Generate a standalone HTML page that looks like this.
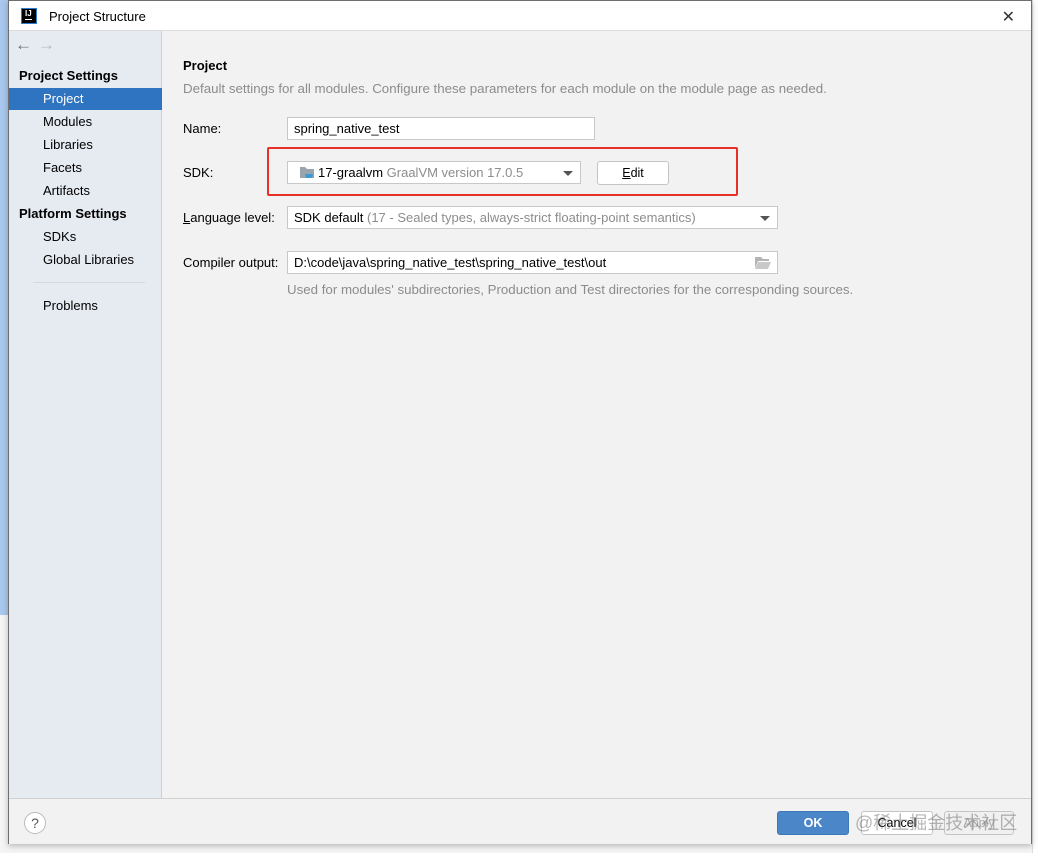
<!DOCTYPE html>
<html><head><meta charset="utf-8"><style>
*{box-sizing:border-box;margin:0;padding:0}
body{width:1040px;height:853px;background:#f5f5f5;position:relative;overflow:hidden;font-family:"Liberation Sans","Noto Sans CJK SC",sans-serif;font-size:13px;color:#000}
.strip{position:absolute;left:0;top:0;width:8px;height:615px;background:#a9c8ee}
.rstrip{position:absolute;left:1032px;top:0;width:8px;height:853px;background:#fff;border-left:1px solid #ddd}
.dlg{position:absolute;left:8px;top:0;width:1024px;height:844px;background:#f2f2f2;border:1px solid #6e6e6e;box-shadow:0 2px 6px rgba(0,0,0,.25)}
.title{height:30px;background:#fff;border-bottom:1px solid #dcdcdc;position:relative}
.logo{position:absolute;left:12px;top:7px;width:16px;height:16px;background:#000;border:1px solid #2a7fd0;color:#fff;font-size:8px;font-weight:bold;padding:1px 0 0 3px;line-height:8px}
.logo i{position:absolute;left:3px;bottom:3px;width:7px;height:1px;background:#fff}
.ttxt{position:absolute;left:40px;top:8px;font-size:13px}
.close{position:absolute;right:16px;top:6px;font-size:16px;color:#333;font-weight:300;font-family:"DejaVu Sans",sans-serif}
.side{position:absolute;left:0;top:30px;width:153px;height:767px;background:#e6eaf1;border-right:1px solid #d0d0d0}
.nav{position:absolute;left:6px;top:4px;font-size:17px;color:#6f6f6f}
.nav span{color:#bbb;margin-left:6px}
.h{position:absolute;left:10px;font-weight:bold;font-size:13px}
.it{position:absolute;left:34px;font-size:13px}
.sel{position:absolute;left:0;top:57px;width:153px;height:22px;background:#2f74c0}
.sep{position:absolute;left:24px;top:251px;width:112px;height:1px;background:#d8d8d8}
.lbl{position:absolute;left:174px;font-size:13px}
.fld{position:absolute;background:#fff;border:1px solid #c8c8c8;height:23px;padding:3px 6px;font-size:13px;white-space:nowrap}
.gray{color:#8c8c8c}
.lbl.gray{font-size:13.3px}
.arr{position:absolute;right:7px;top:9px;width:0;height:0;border-left:5px solid transparent;border-right:5px solid transparent;border-top:5px solid #555}
.btn{position:absolute;border:1px solid #c4c4c4;background:#fff;border-radius:3px;text-align:center;font-size:12.5px}
.foot{position:absolute;left:0;top:797px;width:1022px;height:46px;border-top:1px solid #d0d0d0;background:#f2f2f2}
</style></head><body>
<div class="strip"></div>
<div class="rstrip"></div>
<div class="dlg">
 <div class="title"><div class="logo">IJ<i></i></div><div class="ttxt">Project Structure</div><div class="close">✕</div></div>
 <div class="side">
  <div class="nav">←<span>→</span></div>
  <div class="h" style="top:37px">Project Settings</div>
  <div class="sel"></div>
  <div class="it" style="top:60px;color:#fff">Project</div>
  <div class="it" style="top:83px">Modules</div>
  <div class="it" style="top:106px">Libraries</div>
  <div class="it" style="top:129px">Facets</div>
  <div class="it" style="top:152px">Artifacts</div>
  <div class="h" style="top:175px">Platform Settings</div>
  <div class="it" style="top:198px">SDKs</div>
  <div class="it" style="top:221px">Global Libraries</div>
  <div class="sep"></div>
  <div class="it" style="top:267px">Problems</div>
 </div>
 <div class="h" style="left:174px;top:57px">Project</div>
 <div class="lbl gray" style="top:80px">Default settings for all modules. Configure these parameters for each module on the module page as needed.</div>
 <div class="lbl" style="top:120px">Name:</div>
 <div class="fld" style="left:278px;top:116px;width:308px">spring_native_test</div>
 <div class="lbl" style="top:164px">SDK:</div>
 <div class="fld" style="left:278px;top:160px;width:294px;padding-left:14px">
  <svg width="16" height="14" style="position:absolute;left:12px;top:4px" viewBox="0 0 16 14"><path d="M0 1h5l2 2h7v9H0z" fill="#9aa4ad"/><path d="M5 8h8l-1 4H6z" fill="#3b9bd3"/></svg>
  <span style="margin-left:16px">17-graalvm</span> <span class="gray">GraalVM version 17.0.5</span><div class="arr"></div></div>
 <div class="btn" style="left:588px;top:160px;width:72px;height:24px;line-height:22px"><u>E</u>dit</div>
 <div style="position:absolute;left:258px;top:146px;width:471px;height:49px;border:2px solid #e8302a;border-radius:2px"></div>
 <div class="lbl" style="top:209px"><u>L</u>anguage level:</div>
 <div class="fld" style="left:278px;top:205px;width:491px">SDK default <span class="gray">(17 - Sealed types, always-strict floating-point semantics)</span><div class="arr"></div></div>
 <div class="lbl" style="top:254px">Compiler output:</div>
 <div class="fld" style="left:278px;top:250px;width:491px">D:\code\java\spring_native_test\spring_native_test\out
  <svg width="16" height="12" style="position:absolute;right:6px;top:5px" viewBox="0 0 16 12"><path d="M0 0h6l2 2h6v2H3L0 11z" fill="#b4b4b4"/><path d="M3 5h13l-3 7H0z" fill="#c8c8c8"/></svg></div>
 <div class="lbl gray" style="left:278px;top:281px">Used for modules' subdirectories, Production and Test directories for the corresponding sources.</div>
 <div class="foot">
  <div style="position:absolute;left:15px;top:13px;width:22px;height:22px;border:1px solid #bbb;border-radius:50%;background:#fff;text-align:center;line-height:20px;font-size:14px;color:#555">?</div>
  <div class="btn" style="left:768px;top:12px;width:72px;height:24px;background:#4a86c8;border-color:#3f78b8;color:#fff;font-weight:bold;line-height:22px">OK</div>
  <div class="btn" style="left:852px;top:12px;width:72px;height:24px;line-height:22px">Cancel</div>
  <div class="btn" style="left:935px;top:12px;width:70px;height:24px;line-height:22px;background:#f0f0f0;color:#aaa">Apply</div>
  <div style="position:absolute;left:846px;top:10px;font-size:18px;color:rgba(120,120,120,.55);white-space:nowrap">@稀土掘金技术社区</div>
 </div>
</div>
</body></html>
